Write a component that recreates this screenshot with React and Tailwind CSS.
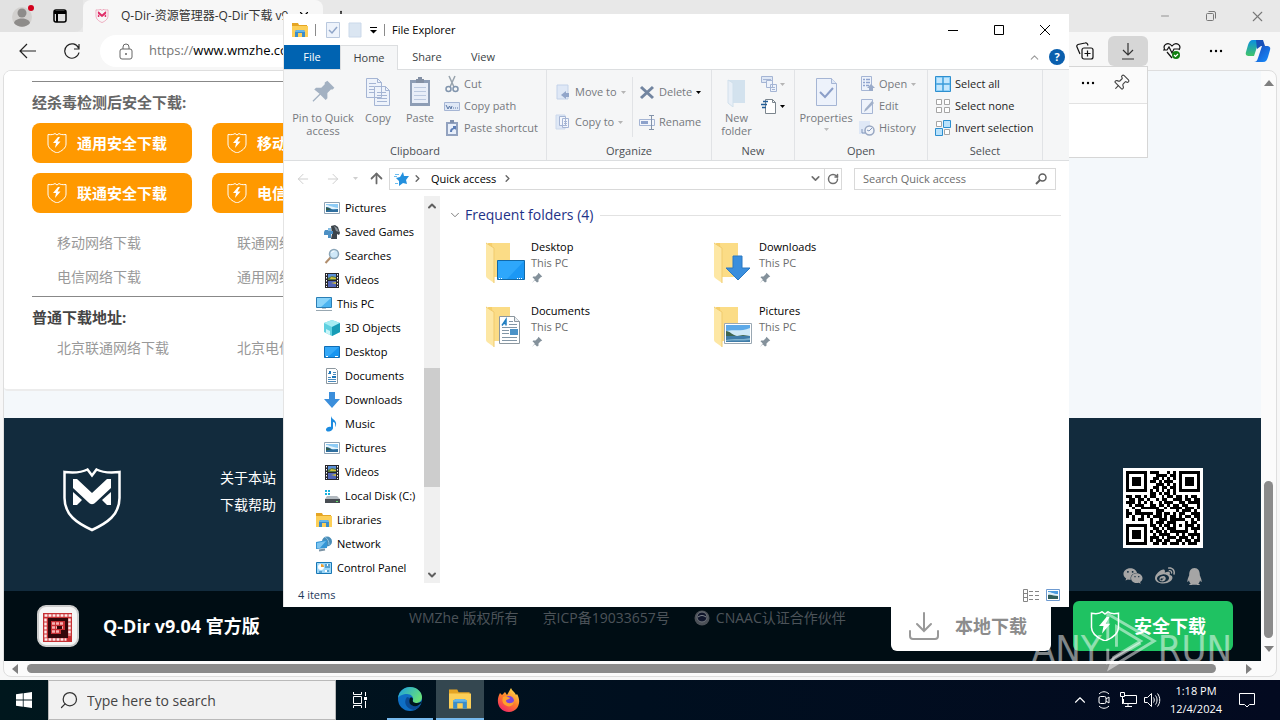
import React from 'react';
import { ChevronDown, ChevronUp, ChevronRight, Lock, RotateCw, ArrowLeft, ArrowRight, ArrowUp, Search, Minus, X, Plus, Pin } from 'lucide-react';
import { FaWeibo, FaWeixin, FaQq } from 'react-icons/fa';
import clsx from 'clsx';

const QR_ROWS = [
  '1111111011100010101111111',
  '1000001000111101101000001',
  '1011101001101010101011101',
  '1011101011010111001011101',
  '1011101000111010101011101',
  '1000001001101101101000001',
  '1111111010101010101111111',
  '0000000011010110100000000',
  '1101101011001011011010110',
  '0110110100101100111011011',
  '1110101010010111001101111',
  '0101110011011010110110001',
  '0010011111100101111011101',
  '1001100000111000010111010',
  '1101111110110110101100111',
  '1010010101110101101011011',
  '0010110010011101111100101',
  '0000000010111011100010110',
  '1111111011010110101011101',
  '1000001001101011100010111',
  '1011101010110101111110010',
  '1011101001011110010101111',
  '1011101011101011101110101',
  '1000001010110110011011011',
  '1111111001101101110101110',
];

const PIN_PATH = 'M10 1l5 5-2 1-3 3v3l-2 1-3-3-4 4 4-5-3-3 1-1h3l3-3z';

function Caret({ className }) {
  return (
    <svg width="5" height="3" viewBox="0 0 5 3" className={clsx('shrink-0', className)} aria-hidden="true">
      <path d="M0 0h5L2.5 3z" fill="currentColor" />
    </svg>
  );
}

/* ---------- small icons of the navigation tree ---------- */

function PictureIcon({ size = 16 }) {
  return (
    <svg width={size} height={size} viewBox="0 0 16 16" aria-hidden="true">
      <path d="M.5 2.500h15v11H.5z" fill="#fff" stroke="#8fa3b5" />
      <path d="M2 4h12v8H2z" fill="#8ecbf5" />
      <path d="M2 5c3 0 5 2 12 3v1H2z" fill="#e6f4fb" />
      <path d="M2 7c3 0 5 2 7 2.500L14 9v3H2z" fill="#2f6f9f" />
      <path d="M2 7.500c2 0 4 1 5 2l-5 1z" fill="#2f5a4b" />
    </svg>
  );
}

function GamesIcon() {
  return (
    <svg width="16" height="16" viewBox="0 0 16 16" aria-hidden="true">
      <path d="M7 2l4-1 3 2 2 6-1 2-2-1v5H7l1-5z" fill="#3c444b" />
      <path d="M10 2l3 2 2 4-3-1z" fill="#8a949c" />
      <path d="M1 6h3V4h3v3h2v3H7v4H4v-3H0V8z" fill="#4d90c4" />
      <path d="M4 4h3v3H4z" fill="#85bce2" />
    </svg>
  );
}

function MagnifierIcon() {
  return (
    <svg width="16" height="16" viewBox="0 0 16 16" aria-hidden="true">
      <path d="M1.500 15L7 9" stroke="#b08d6c" strokeWidth="2" />
      <circle cx="10" cy="6" r="4.500" fill="#cfe8f8" stroke="#8aa5b8" strokeWidth="1.500" />
      <path d="M7.500 5a3 3 0 0 1 3-2" stroke="#fff" fill="none" />
    </svg>
  );
}

function FilmIcon() {
  return (
    <svg width="16" height="16" viewBox="0 0 16 16" aria-hidden="true">
      <path d="M1 1h14v15H1z" fill="#26262c" />
      <path d="M4 2h8v6H4z" fill="#5a7a3c" />
      <path d="M4 2h8v3L8 4 4 6z" fill="#5b8fd6" />
      <path d="M4 9h8v6H4z" fill="#5266b8" />
      <path d="M7 5l5 1v1H6zM7 11l5-1v2z" fill="#d5c33c" />
      <path d="M2.500 2v13M13.500 2v13" stroke="#fff" strokeDasharray="1.500 1.500" />
    </svg>
  );
}

function PcIcon() {
  return (
    <svg width="16" height="16" viewBox="0 0 16 16" aria-hidden="true">
      <path d="M.5 1.500h15v10H.5z" fill="#4db4f0" stroke="#2b7eb5" />
      <path d="M1 2h14L5 11H1z" fill="#8ad4fa" />
      <path d="M0 14.500h16" stroke="#98a7b1" />
      <path d="M6 12h4v1H6z" fill="#b8c4cc" />
    </svg>
  );
}

function CubeIcon() {
  return (
    <svg width="16" height="16" viewBox="0 0 16 16" aria-hidden="true">
      <path d="M8 0l8 3v9l-8 4-8-4V3z" fill="#5fd0e0" />
      <path d="M8 0l8 3-8 4-8-4z" fill="#a5edf3" />
      <path d="M8 7l8-4v9l-8 4z" fill="#179cb6" />
      <path d="M2 9l4 2v4l-4-2z" fill="#c9f5f8" />
    </svg>
  );
}

function DesktopIcon() {
  return (
    <svg width="16" height="16" viewBox="0 0 16 16" aria-hidden="true">
      <path d="M.5 2.500h15v11H.5z" fill="#1795f0" stroke="#0f6db5" />
      <path d="M1 3h14L5 12H1z" fill="#35a9f8" />
      <path d="M2 12.500h2M11 12.500h3" stroke="#fff" />
    </svg>
  );
}

function DocumentIcon() {
  return (
    <svg width="16" height="16" viewBox="0 0 16 16" aria-hidden="true">
      <path d="M2.500.5h9l2 2v13h-11z" fill="#fff" stroke="#8c979f" />
      <path d="M4 5.500h3M9 4.500h3M9 6.500h3M4 9.500h3M4 11.500h8M4 13.500h8" stroke="#4a89bb" />
      <path d="M5 3h2v3H5zM8 8h4v2H8z" fill="#1d77bb" />
    </svg>
  );
}

function DownArrowIcon() {
  return (
    <svg width="16" height="16" viewBox="0 0 16 16" aria-hidden="true">
      <path d="M5 0h6v7h5l-8 9-8-9h5z" fill="#3b8edb" />
    </svg>
  );
}

function MusicIcon() {
  return (
    <svg width="16" height="16" viewBox="0 0 16 16" aria-hidden="true">
      <path d="M7 0c1 4 6 4 5 9 0 1-1 2-1 2 1-4-1-5-2-5v6c0 3-6 5-7 2-.5-3 4-4 5-3z" fill="#1c8be0" />
    </svg>
  );
}

function DiskIcon() {
  return (
    <svg width="16" height="16" viewBox="0 0 16 16" aria-hidden="true">
      <path d="M1 2h2v2H1zM4 2h2v2H4zM1 5h2v2H1zM4 5h2v2H4z" fill="#19b1dd" />
      <path d="M3 8h10l3 3H1z" fill="#b3bac0" />
      <path d="M1 11h15v4H1z" fill="#474d52" />
      <path d="M12 13.500h2" stroke="#63e06a" />
    </svg>
  );
}

function ExplorerIcon({ size = 16 }) {
  return (
    <svg width={size} height={size} viewBox="0 0 16 16" aria-hidden="true">
      <path d="M0 1h6l1 2h8v4H0z" fill="#e5a524" />
      <path d="M0 4h16v11H0z" fill="#fccf58" />
      <path d="M3 15V9l2-1h6l2 1v6h-3v-4H6v4z" fill="#3c8dc9" />
      <path d="M3 9l2-1h6l2 1v1H3z" fill="#66b6e8" />
    </svg>
  );
}

function NetworkIcon() {
  return (
    <svg width="16" height="16" viewBox="0 0 16 16" aria-hidden="true">
      <circle cx="11" cy="5.500" r="5" fill="#4a8db8" />
      <path d="M9 1c3 2 4 4 4 8" stroke="#8fc4e3" fill="none" />
      <path d="M0 6l11-2v8L0 13z" fill="#3596d6" />
      <path d="M1 7l9-2-6 7H1z" fill="#7cc4ef" />
      <path d="M3 14.500l6-1" stroke="#7b93a4" strokeWidth="2" />
    </svg>
  );
}

function ControlPanelIcon() {
  return (
    <svg width="16" height="16" viewBox="0 0 16 16" aria-hidden="true">
      <path d="M.5 2.500h15v11H.5z" fill="#9dd7f8" stroke="#1877b4" />
      <circle cx="5" cy="7" r="3" fill="#fff" />
      <path d="M5 7V4a3 3 0 0 1 3 3z" fill="#f0a132" />
      <path d="M9 5h5M9 7h5M3 12h3M9 11h4" stroke="#156da7" />
      <path d="M11 4h1v2h-1zM9 10h2v2H9z" fill="#fff" />
    </svg>
  );
}

const TREE = [
  { label: 'Pictures', Icon: PictureIcon, level: 2 },
  { label: 'Saved Games', Icon: GamesIcon, level: 2 },
  { label: 'Searches', Icon: MagnifierIcon, level: 2 },
  { label: 'Videos', Icon: FilmIcon, level: 2 },
  { label: 'This PC', Icon: PcIcon, level: 1 },
  { label: '3D Objects', Icon: CubeIcon, level: 2 },
  { label: 'Desktop', Icon: DesktopIcon, level: 2 },
  { label: 'Documents', Icon: DocumentIcon, level: 2 },
  { label: 'Downloads', Icon: DownArrowIcon, level: 2 },
  { label: 'Music', Icon: MusicIcon, level: 2 },
  { label: 'Pictures', Icon: PictureIcon, level: 2 },
  { label: 'Videos', Icon: FilmIcon, level: 2 },
  { label: 'Local Disk (C:)', Icon: DiskIcon, level: 2 },
  { label: 'Libraries', Icon: ExplorerIcon, level: 1 },
  { label: 'Network', Icon: NetworkIcon, level: 1 },
  { label: 'Control Panel', Icon: ControlPanelIcon, level: 1 },
];

const FOLDERS = ['Desktop', 'Downloads', 'Documents', 'Pictures'];

function FolderIcon({ kind }) {
  return (
    <svg width="40" height="42" viewBox="0 0 40 42" className="mt-0.5 shrink-0" aria-hidden="true">
      <path d="M3 2h22v34H9z" fill="#f6cf6b" />
      <path d="M7 2h18v34H9z" fill="#fbdc86" />
      <path d="M1 2l8 5v35l-7-5c-1-1-1-2-1-3z" fill="#fde7a4" />
      <path d="M1 2l8 5v35" stroke="#f1cb6c" fill="none" />
      {kind === 'Desktop' && (
        <g>
          <path d="M12.500 19.500h27v19h-27z" fill="#1b98f5" stroke="#1269a8" />
          <path d="M13 20h26L22 38h-9z" fill="#2ea7fb" />
          <path d="M14 37.500h3M32 37.500h6" stroke="#fff" strokeDasharray="1 1" />
        </g>
      )}
      {kind === 'Downloads' && <path d="M20 15h9v12h8L25 39 13 27h7z" fill="#3a8edd" stroke="#2b78c2" strokeWidth="1" />}
      {kind === 'Documents' && (
        <g>
          <path d="M14.500 11.500h15l5 5v22h-20z" fill="#fff" stroke="#8c979f" />
          <path d="M29.500 11.500v5h5" fill="#e9eef1" stroke="#8c979f" />
          <path d="M24 16.500h4M24 19.500h8M17 22.500h15M17 25.500h7M17 28.500h7M17 32.500h15M17 35.500h15" stroke="#8296a6" />
          <path d="M17 20.500l4-6v6M18.500 18.500h3" stroke="#1f7ec1" strokeWidth="1.500" fill="none" />
          <path d="M25 24h8v6h-8z" fill="#4a92c7" />
        </g>
      )}
      {kind === 'Pictures' && (
        <g>
          <path d="M11.500 18.500h27v20h-27z" fill="#fff" stroke="#9aa8b3" />
          <path d="M13 20h24v17H13z" fill="#5ca9e8" />
          <path d="M13 26c8-2 14 1 24-3v8H13z" fill="#cfe9f7" />
          <path d="M13 26c4 0 6 4 11 5l6-1 7 1v1H13z" fill="#3f6650" />
          <path d="M13 31h24v6H13z" fill="#3f7ca8" />
          <path d="M13 35c7-2 16 0 24-2v2c-8 1-16 0-24 1z" fill="#7fb2cf" />
        </g>
      )}
    </svg>
  );
}

/* ---------- ribbon ---------- */

function RibbonGlyph({ name }) {
  const blue = '#a5b5d4';
  const pale = '#dfe8f6';
  switch (name) {
    case 'pin':
      return (
        <svg width="28" height="30" viewBox="0 0 16 17">
          <path d="M10.500 2l4 4-1 1h-1l-2 2v3l-1 1-3-3-4 4-.5-.5 4-4-3-2.500 1-1h3l2-2V3z" fill="#a3b1c2" />
        </svg>
      );
    case 'copy':
      return (
        <svg width="28" height="30" viewBox="0 0 28 30">
          <path d="M2.500 1.500h11l4 4v15h-15zM10.500 9.500h11l4 4v15h-15z" fill="#eef3fb" stroke={blue} />
          <path d="M13.500 1.500v4h4M21.500 9.500v4h4M5 6.500h7M5 9.500h5M5 12.500h5M5 15.500h5M13 15.500h9M13 18.500h10M13 21.500h10M13 24.500h10" fill="none" stroke={blue} />
        </svg>
      );
    case 'paste':
      return (
        <svg width="28" height="30" viewBox="0 0 28 30">
          <path d="M4 3h20v26H4z" fill="#8d9db5" />
          <path d="M6 6h16v20H6z" fill="#e8eef8" />
          <path d="M10 2h2V0h4v2h2v4h-8z" fill="#8390a4" />
          <path d="M8 10.500h12M8 14.500h12M8 18.500h12M8 22.500h12" stroke="#bac8df" />
        </svg>
      );
    case 'folder':
      return (
        <svg width="28" height="30" viewBox="0 0 28 30">
          <path d="M5 3h17v23H9z" fill="#d3e2ee" />
          <path d="M5 3l5 3v24l-5-4z" fill="#e8eff7" stroke="#d1e0ec" />
        </svg>
      );
    case 'properties':
      return (
        <svg width="28" height="30" viewBox="0 0 28 30">
          <path d="M4.500 1.500h15l5 5v22h-20z" fill="#edf2fb" stroke={blue} />
          <path d="M19.500 1.500v5h5" fill={pale} stroke={blue} />
          <path d="M8 15l5 5 8-9" fill="none" stroke="#8c9fc8" strokeWidth="2" />
        </svg>
      );
    case 'cut':
      return (
        <svg width="16" height="18" viewBox="0 0 16 18">
          <path d="M5 1l5 11M11 1L6 12" stroke="#98a3ad" strokeWidth="1.500" />
          <circle cx="4.500" cy="14" r="2.500" fill="none" stroke="#8195ad" strokeWidth="1.500" />
          <circle cx="11.500" cy="14" r="2.500" fill="none" stroke="#8195ad" strokeWidth="1.500" />
        </svg>
      );
    case 'path':
      return (
        <svg width="16" height="16" viewBox="0 0 16 16">
          <path d="M.5 4.500h15v8H.5z" fill={pale} stroke={blue} />
          <path d="M2 7l2 4 1.500-3L7 11l1-3M9 10h1M11 10h1M13 10h1" fill="none" stroke="#5a77a5" />
        </svg>
      );
    case 'shortcut':
      return (
        <svg width="16" height="16" viewBox="0 0 16 16">
          <path d="M2 2h12v14H2z" fill="#92a2bf" />
          <path d="M4 4h8v10H4z" fill="#e8effa" />
          <path d="M6 0h4v3H6z" fill="#7f90ad" />
          <path d="M6 12c0-3 1-4 3-4V6h3v4l-1-1c-2 0-3 1-3 3z" fill="#5d7eb6" />
        </svg>
      );
    case 'move':
      return (
        <svg width="16" height="16" viewBox="0 0 16 16">
          <path d="M2 1h11v14H2z" fill={pale} stroke="#c3d2e9" />
          <path d="M14 9h-3V7l-5 4 5 4v-2h3z" fill="#92a6ca" />
        </svg>
      );
    case 'copyTo':
      return (
        <svg width="16" height="16" viewBox="0 0 16 16">
          <path d="M1 1h9v14H1z" fill={pale} stroke="#ccd9ec" />
          <path d="M4.500 2.500h6v9h-6zM7.500 4.500h6v9h-6z" fill="#f4f7fc" stroke={blue} />
          <path d="M9 7.500h3M9 9.500h3M9 11.500h3" stroke={blue} />
        </svg>
      );
    case 'delete':
      return (
        <svg width="16" height="16" viewBox="0 0 16 16">
          <path d="M2 3l12 11M14 3L2 14" stroke="#7285a0" strokeWidth="3" />
        </svg>
      );
    case 'rename':
      return (
        <svg width="16" height="16" viewBox="0 0 16 16">
          <path d="M.5 5.500h15v6H.5z" fill="#f3f6fc" stroke={blue} />
          <path d="M2 7h7v3H2z" fill="#8da2cb" />
          <path d="M10 1.500h5M12.500 2v13M10 15.500h5" stroke="#8393aa" />
        </svg>
      );
    case 'newItem':
      return (
        <svg width="17" height="16" viewBox="0 0 17 16">
          <path d="M.5.500h11v6H.5z" fill={pale} stroke={blue} />
          <path d="M5.500 4.500h6v7h-6zM9.500 8.500h6v7h-6z" fill="#eef3fb" stroke={blue} />
          <path d="M2 3.500h8M11 11.500h3M11 13.500h3" stroke={blue} />
        </svg>
      );
    case 'easyAccess':
      return (
        <svg width="17" height="16" viewBox="0 0 17 16">
          <path d="M4.500 1.500h7l3 3v11h-10z" fill="#fff" stroke="#7b858d" />
          <path d="M11.500 1.500v3h3" fill="none" stroke="#7b858d" />
          <path d="M2 3.500h5M0 6.500h6M1 9.500h4" stroke="#235d96" strokeWidth="1.500" />
        </svg>
      );
    case 'open':
      return (
        <svg width="16" height="16" viewBox="0 0 16 16">
          <path d="M2.500.500h10v14h-10z" fill="#eef3fb" stroke={blue} />
          <path d="M4 3.500h2M4 6.500h2M4 9.500h2M7 3.500h4M7 6.500h4M7 9.500h3" stroke="#8fa4cf" strokeWidth="1.500" />
          <path d="M12 8l4 4h-2v3h-4v-3H8z" fill="#9aabc9" />
        </svg>
      );
    case 'edit':
      return (
        <svg width="16" height="16" viewBox="0 0 16 16">
          <path d="M2.500 1.500h11v14h-11z" fill="#eef3fb" stroke={blue} />
          <path d="M5 14l1-3 7-8 2 2-7 7z" fill="#a1b0c9" />
        </svg>
      );
    case 'history':
      return (
        <svg width="16" height="16" viewBox="0 0 16 16">
          <path d="M0 1h11v13H0z" fill={pale} />
          <circle cx="10.500" cy="10.500" r="4.500" fill="#f2f5fa" stroke="#98a7c2" strokeWidth="1.500" />
          <path d="M13 8l-3 3-2-1M3 9v4h3" fill="none" stroke="#8297bb" />
        </svg>
      );
    case 'selectAll':
      return (
        <svg width="16" height="16" viewBox="0 0 16 16">
          <path d="M.5.500h15v15H.5z" fill="#8ed0f9" stroke="#2d8fcf" />
          <path d="M2 2h5v5H2zM9 2h5v5H9zM2 9h5v5H2zM9 9h5v5H9z" fill="#c4e7fd" />
          <path d="M8 1v14M1 8h14" stroke="#2d8fcf" />
        </svg>
      );
    case 'selectNone':
      return (
        <svg width="16" height="16" viewBox="0 0 16 16">
          <path d="M1.500 1.500h5v5h-5zM9.500 1.500h5v5h-5zM1.500 9.500h5v5h-5zM9.500 9.500h5v5h-5z" fill="#fff" stroke="#a5a5a5" />
        </svg>
      );
    case 'invert':
      return (
        <svg width="16" height="16" viewBox="0 0 16 16">
          <path d="M1.500 1.500h5v5h-5zM9.500 9.500h5v5h-5z" fill="#fff" stroke="#a5a5a5" />
          <path d="M8.500.500h7v7h-7zM.5 8.500h7v7h-7z" fill="#b9e2fc" stroke="#2d8fcf" />
        </svg>
      );
    default:
      return null;
  }
}

function SmallAction({ icon, label, caret, active, darkCaret, title }) {
  return (
    <button
      type="button"
      aria-label={title}
      className={clsx('flex h-[22px] items-center whitespace-nowrap', label ? 'gap-1' : 'gap-0.5', active ? 'text-[#1e1e1e]' : 'text-[#75797e]')}
    >
      <RibbonGlyph name={icon} />
      {label && <span>{label}</span>}
      {caret && <Caret className={darkCaret ? 'text-black' : 'text-[#b5b5b5]'} />}
    </button>
  );
}

function BigAction({ icon, label, className, caret }) {
  return (
    <button type="button" className={clsx('flex flex-col items-center pt-1 leading-[13px] text-[#75797e]', className)}>
      <RibbonGlyph name={icon} />
      <span className="mt-1 text-center">{label}</span>
      {caret && <Caret className="mt-1 text-[#bdbdbd]" />}
    </button>
  );
}

function RibbonGroup({ title, className, children }) {
  return (
    <section className={clsx('flex shrink-0 flex-col border-r border-[#e1e3e6]', className)}>
      <div className="flex h-[73px] shrink-0 items-start pt-[3px]">{children}</div>
      <h3 className="text-center leading-4 text-[#4b4f54]">{title}</h3>
    </section>
  );
}

function Ribbon() {
  return (
    <div className="flex h-[92px] border-y border-[#dcdee0] bg-[#f5f6f7]">
      <RibbonGroup title="Clipboard" className="w-[263px]">
        <BigAction icon="pin" label="Pin to Quick access" className="ml-1 w-[70px]" />
        <BigAction icon="copy" label="Copy" className="w-10" />
        <BigAction icon="paste" label="Paste" className="w-11" />
        <div className="flex flex-col pl-0.5">
          <SmallAction icon="cut" label="Cut" />
          <SmallAction icon="path" label="Copy path" />
          <SmallAction icon="shortcut" label="Paste shortcut" />
        </div>
      </RibbonGroup>
      <RibbonGroup title="Organize" className="w-[165px]">
        <div className="mt-1 flex w-[86px] flex-col gap-2 border-r border-[#e1e3e6] pt-1 pb-1 pl-2">
          <SmallAction icon="move" label="Move to" caret />
          <SmallAction icon="copyTo" label="Copy to" caret />
        </div>
        <div className="mt-1 flex flex-col gap-2 pt-1 pl-1.5">
          <SmallAction icon="delete" label="Delete" caret darkCaret />
          <SmallAction icon="rename" label="Rename" />
        </div>
      </RibbonGroup>
      <RibbonGroup title="New" className="w-[83px]">
        <BigAction icon="folder" label="New folder" className="w-[49px]" />
        <div className="flex flex-col">
          <SmallAction icon="newItem" title="New item" caret />
          <SmallAction icon="easyAccess" title="Easy access" caret darkCaret />
        </div>
      </RibbonGroup>
      <RibbonGroup title="Open" className="w-[133px]">
        <BigAction icon="properties" label="Properties" caret className="w-[62px]" />
        <div className="flex flex-col pl-0.5">
          <SmallAction icon="open" label="Open" caret />
          <SmallAction icon="edit" label="Edit" />
          <SmallAction icon="history" label="History" />
        </div>
      </RibbonGroup>
      <RibbonGroup title="Select" className="w-[115px]">
        <div className="flex flex-col pl-[7px]">
          <SmallAction icon="selectAll" label="Select all" active />
          <SmallAction icon="selectNone" label="Select none" active />
          <SmallAction icon="invert" label="Invert selection" active />
        </div>
      </RibbonGroup>
    </div>
  );
}

function ExplorerTitleBar() {
  return (
    <header className="flex h-[31px] items-center pl-2">
      <ExplorerIcon />
      <span className="ml-[7px] h-3 w-px bg-[#8b8b8b]" />
      <svg width="14" height="16" viewBox="0 0 14 16" className="ml-2.5" aria-hidden="true">
        <path d="M.5.500h13v15H.5z" fill="#eef3fb" stroke="#b9c8de" />
        <path d="M3 8l3 3 5-6" fill="none" stroke="#8fa5c8" strokeWidth="1.500" />
      </svg>
      <svg width="14" height="16" viewBox="0 0 14 16" className="ml-2" aria-hidden="true">
        <path d="M1 1h12v14H1z" fill="#dbe6f2" stroke="#cbd9ea" />
      </svg>
      <svg width="7" height="8" viewBox="0 0 7 8" className="ml-2" aria-hidden="true">
        <path d="M0 1.500h7" stroke="#000" />
        <path d="M0 4h7L3.500 7.500z" />
      </svg>
      <span className="mx-[7px] h-3 w-px bg-[#8b8b8b]" />
      <h1 className="text-black">File Explorer</h1>
      <div className="ml-auto flex h-full">
        <button type="button" aria-label="Minimize" className="flex w-[46px] items-center justify-center">
          <svg width="10" height="10" aria-hidden="true"><path d="M0 5.500h10" stroke="#000" /></svg>
        </button>
        <button type="button" aria-label="Maximize" className="flex w-[45px] items-center justify-center">
          <svg width="10" height="10" aria-hidden="true"><path d="M.5.500h9v9h-9z" fill="none" stroke="#000" /></svg>
        </button>
        <button type="button" aria-label="Close" className="flex w-12 items-center justify-center">
          <svg width="10" height="10" aria-hidden="true"><path d="M0 0l10 10M10 0L0 10" stroke="#000" /></svg>
        </button>
      </div>
    </header>
  );
}

function AddressRow() {
  return (
    <div className="flex h-[35px] shrink-0 items-center pr-[13px] pl-[11px]">
      <button type="button" aria-label="Back"><ArrowLeft size={16} strokeWidth={1.500} className="text-[#cfcfcf]" /></button>
      <button type="button" aria-label="Forward" className="ml-3.5"><ArrowRight size={16} strokeWidth={1.500} className="text-[#cfcfcf]" /></button>
      <Caret className="ml-3 text-[#cfcfcf]" />
      <button type="button" aria-label="Up" className="ml-2.5"><ArrowUp size={17} strokeWidth={2.500} className="text-[#6a6a6a]" /></button>
      <div className="ml-1 flex h-[22px] flex-1 items-center border border-[#d9d9d9]">
        <svg width="16" height="16" viewBox="0 0 16 16" className="ml-1 shrink-0" aria-hidden="true">
          <path d="M9 1l1 4 5 0-3 4 1 4-4-1-4 3 0-5-3-3 4-1z" fill="#2390de" />
          <path d="M5 3.500H1M3 5.500H0M4 12.500H1" stroke="#6cbdf0" />
        </svg>
        <ChevronRight size={11} strokeWidth={3} className="mr-1 ml-0.5 text-[#666]" />
        <span className="ml-1 text-black">Quick access</span>
        <ChevronRight size={11} strokeWidth={3} className="ml-1.5 text-[#666]" />
        <button type="button" aria-label="Previous locations" className="mr-0.5 ml-auto"><ChevronDown size={13} strokeWidth={3} className="text-[#707070]" /></button>
        <button type="button" aria-label="Refresh" className="flex h-full w-[17px] items-center justify-center border-l border-[#d9d9d9]">
          <RotateCw size={12} strokeWidth={3} className="text-[#707070]" />
        </button>
      </div>
      <label className="ml-3 flex h-[22px] w-[202px] items-center border border-[#d9d9d9] px-2">
        <input type="text" aria-label="Search Quick access" placeholder="Search Quick access" className="min-w-0 flex-1 outline-none placeholder:text-[#6d6d6d]" />
        <svg width="12" height="12" viewBox="0 0 12 12" fill="none" stroke="#606060" strokeWidth="1.500" aria-hidden="true">
          <circle cx="7.500" cy="4.500" r="3.500" />
          <path d="M5 7L1 11" strokeWidth="2" />
        </svg>
      </label>
    </div>
  );
}

function NavigationTree() {
  return (
    <div className="flex w-[156px] shrink-0">
      <ul className="min-w-0 flex-1 overflow-hidden text-black">
        {TREE.map(({ label, Icon, level }, index) => (
          <li key={`${label}-${index}`} className={clsx('flex h-6 items-center gap-[5px] whitespace-nowrap', level === 1 ? 'pl-8' : 'pl-10')}>
            <Icon />
            <span>{label}</span>
          </li>
        ))}
      </ul>
      <div className="flex w-4 flex-col items-center bg-[#f0f0f0]">
        <ChevronUp size={12} strokeWidth={4} className="my-1 text-[#606060]" />
        <div className="mt-[152px] h-[119px] w-full bg-[#cdcdcd]" />
        <ChevronDown size={12} strokeWidth={4} className="mt-auto mb-0.5 text-[#606060]" />
      </div>
    </div>
  );
}

function ExplorerWindow() {
  return (
    <section
      aria-label="File Explorer"
      className="absolute top-[14px] right-[211px] bottom-[113px] left-[283px] z-20 flex flex-col border-l border-[#e4e4e4] bg-white text-[11px] leading-4"
    >
      <ExplorerTitleBar />
      <nav className="flex h-6 items-stretch text-[#3b3f44]">
        <button type="button" className="w-14 bg-[#0063b1] text-white">File</button>
        <button type="button" className="relative z-10 -mb-px w-[58px] border border-b-0 border-[#dcdee0] bg-[#f5f6f7]">Home</button>
        <button type="button" className="w-[58px]">Share</button>
        <button type="button" className="w-[54px]">View</button>
        <span className="ml-auto flex items-center gap-2 pr-1">
          <ChevronUp size={13} className="text-[#9b9b9b]" />
          <span className="flex size-4 items-center justify-center rounded-full bg-[#0a5fae] font-bold text-white">?</span>
        </span>
      </nav>
      <Ribbon />
      <AddressRow />
      <div className="flex min-h-0 flex-1">
        <NavigationTree />
        <main className="min-w-0 flex-1 pt-[7px] pr-2 pl-2">
          <div className="flex items-center gap-[3px]">
            <ChevronDown size={14} strokeWidth={1.500} className="text-[#6b6b6b]" />
            <h2 className="text-[14px] leading-6 text-[#1e3287]">Frequent folders (4)</h2>
            <span className="ml-1 h-px flex-1 bg-[#e2e2e2]" />
          </div>
          <ul className="mt-3 ml-[37px] grid grid-cols-[228px_228px] gap-y-4">
            {FOLDERS.map((name) => (
              <li key={name} className="flex h-12 gap-1.5">
                <FolderIcon kind={name} />
                <div>
                  <p className="text-black">{name}</p>
                  <p className="text-[#6d6d6d]">This PC</p>
                  <svg width="12" height="12" viewBox="0 0 16 16" className="mt-px" aria-hidden="true">
                    <path d={PIN_PATH} fill="#84919b" />
                  </svg>
                </div>
              </li>
            ))}
          </ul>
        </main>
      </div>
      <footer className="flex h-6 shrink-0 items-center pr-[9px] pl-3.5 text-[#1e395b]">
        <span>4 items</span>
        <svg width="17" height="13" viewBox="0 0 17 13" className="ml-auto" aria-hidden="true">
          <path d="M.5.500h4v12h-4zM1 4.500h3M1 8.500h3" fill="none" stroke="#858585" />
          <path d="M6 2.500h4M12 2.500h4M6 6.500h4M12 6.500h4M6 10.500h4M12 10.500h4" stroke="#858585" />
        </svg>
        <svg width="14" height="12" viewBox="0 0 14 12" className="ml-1.5" aria-hidden="true">
          <path d="M.5.500h13v11H.5z" fill="#fff" stroke="#6e9ad0" />
          <path d="M2 2h10v8H2z" fill="#4a9be0" />
          <path d="M2 3c4 0 5 2 10 2v2H2z" fill="#dff0fa" />
          <path d="M2 6c3-1 6 1 10 1v3H2z" fill="#315f5c" />
        </svg>
      </footer>
    </section>
  );
}

/* ---------- browser ---------- */

function Shield({ size, color = '#fff' }) {
  return (
    <svg width={size} height={size} viewBox="0 0 20 20" aria-hidden="true">
      <path d="M1 1.500c3 .500 6 0 7-1l2 1.500 2-1.500c1 1 4 1.500 7 1V11c0 4-4 7-9 9-5-2-9-5-9-9z" fill="none" stroke={color} strokeWidth="1" />
      <path d="M11 4l-5 6h3l-1 5 5.500-6.500h-3L13 4z" fill={color} />
    </svg>
  );
}

function MShield({ size, stroke, fill }) {
  return (
    <svg width={size} height={size} viewBox="0 0 64 64" aria-hidden="true">
      <path d="M4.500 4c9 1 18 0 23-2.500l4.500 6 4.500-6c5 2.500 14 3.500 23 2.500v26c0 17-12.500 25-27.500 32C17 55 4.500 47 4.500 30z" fill="none" stroke={stroke} strokeWidth="2.500" />
      <path d="M13 11l4 0 15 14 15-14h4v9L36 34c-3 3-5 3-8 0L13 20zM13 24l9 8-5 5h-4zM51 24l-9 8 5 5h4z" fill={fill} />
    </svg>
  );
}

function TabStrip() {
  return (
    <div className="flex h-8 items-stretch bg-[#e8e8e8]">
      <div className="flex w-[83px] items-center rounded-br-lg bg-[#e2e2e2] pl-3">
        <svg width="24" height="26" viewBox="0 0 24 26" aria-hidden="true">
          <circle cx="10" cy="14" r="10" fill="#d2d0ce" />
          <circle cx="10" cy="10" r="4.500" fill="#8e8c8a" />
          <path d="M2 20c1-6 15-6 16 0-4 5-12 5-16 0z" fill="#8e8c8a" />
          <circle cx="19" cy="5" r="3" fill="#d2001c" />
        </svg>
        <svg width="14" height="14" viewBox="0 0 14 14" className="ml-[17px]" aria-hidden="true">
          <rect x="1" y="1" width="12" height="12" rx="2" fill="none" stroke="#000" strokeWidth="1.500" />
          <path d="M1 2h12v3H1zM3 5h2v8H3z" />
        </svg>
      </div>
      <div className="flex w-60 items-center rounded-t-lg bg-[#f7f7f7] pr-3 pl-3">
        <MShield size={14} stroke="#e87599" fill="#e02c67" />
        <span className="ml-3 flex-1 truncate text-[12px] text-[#333]">Q-Dir-资源管理器-Q-Dir下载 v9</span>
        <X size={14} className="shrink-0" />
      </div>
      <Plus size={16} className="mt-2 ml-2.5" />
      <div className="ml-auto flex text-[#777]">
        <button type="button" aria-label="Minimize window" className="flex w-[46px] items-center justify-center"><Minus size={12} strokeWidth={1.500} /></button>
        <button type="button" aria-label="Restore window" className="flex w-[46px] items-center justify-center">
          <svg width="10" height="10" viewBox="0 0 10 10" fill="none" stroke="currentColor" aria-hidden="true">
            <rect x=".5" y="2.500" width="7" height="7" rx="1" />
            <path d="M2.500.500H8A1.500 1.500 0 0 1 9.500 2v5.500" />
          </svg>
        </button>
        <button type="button" aria-label="Close window" className="flex w-[46px] items-center justify-center"><X size={17} strokeWidth={1.500} /></button>
      </div>
    </div>
  );
}

function Dots({ size = 14 }) {
  return (
    <svg width={size} height="4" viewBox="0 0 14 4" aria-hidden="true">
      <circle cx="2" cy="2" r="1.200" />
      <circle cx="7" cy="2" r="1.200" />
      <circle cx="12" cy="2" r="1.200" />
    </svg>
  );
}

function BrowserToolbar() {
  return (
    <div className="relative flex h-[38px] items-center">
      <button type="button" aria-label="Back to previous page" className="ml-[19px]">
        <svg width="17" height="16" viewBox="0 0 17 16" fill="none" stroke="#222" aria-hidden="true"><path d="M8 1L1 8l7 7M1 8h16" strokeWidth="1.200" /></svg>
      </button>
      <button type="button" aria-label="Reload" className="ml-7">
        <svg width="16" height="17" viewBox="0 0 16 17" fill="none" stroke="#222" aria-hidden="true"><path d="M14.500 5A7.200 7.200 0 1 0 15 9.500M15 1v5h-5" strokeWidth="1.200" /></svg>
      </button>
      <div className="ml-5 flex h-8 flex-1 items-center rounded-full bg-white pl-[18px]">
        <svg width="16" height="17" viewBox="0 0 16 17" fill="none" stroke="#666" aria-hidden="true">
          <rect x="2" y="6" width="12" height="10" rx="2" />
          <path d="M5 6V4a3 3 0 0 1 6 0v2" />
          <circle cx="8" cy="11" r="1" fill="#666" stroke="none" />
        </svg>
        <span className="ml-[15px] text-[13px] text-[#767676]">https://<span className="text-black">www.wmzhe.co</span></span>
      </div>
      <div className="flex w-[218px] shrink-0 items-center">
        <div className="flex w-[46px] justify-center">
          <svg width="18" height="18" viewBox="0 0 18 18" fill="none" stroke="#111" strokeWidth="1.200" aria-hidden="true">
            <rect x="6" y="6" width="11" height="11" rx="2" />
            <path d="M11.500 8.500v6M8.500 11.500h6M4 12L1 5c-.5-1 0-2 1-2.500L9 1c1-.5 2 0 2.500 1l.5 1.500" />
          </svg>
        </div>
        <button type="button" aria-label="Downloads" className="flex h-[30px] w-10 items-center justify-center rounded-md bg-[#d6d6d6]">
          <svg width="14" height="17" viewBox="0 0 14 17" fill="none" stroke="#333" strokeWidth="1.200" aria-hidden="true"><path d="M7 0v12M2 7l5 5 5-5M1 16h12" /></svg>
        </button>
        <div className="flex w-12 justify-center">
          <svg width="18" height="18" viewBox="0 0 18 18" fill="none" stroke="#111" strokeWidth="1.200" aria-hidden="true">
            <path d="M2 8C-1 3 5-1 9 4c4-5 10-1 7 4M0 8h4l2-3 3 6 2-4h6M4 10l5 6" />
            <circle cx="13" cy="13" r="4" fill="#118011" stroke="none" />
            <path d="M11 13l1.500 1.500L15 12" stroke="#fff" />
          </svg>
        </div>
        <button type="button" aria-label="Settings and more" className="flex w-10 justify-center"><Dots /></button>
        <svg width="26" height="24" viewBox="0 0 26 24" className="ml-[9px]" aria-hidden="true">
          <defs>
            <linearGradient id="cpA" x1="0" y1="0" x2="0" y2="1"><stop stopColor="#0a8fe0" /><stop offset="1" stopColor="#42c568" /></linearGradient>
            <linearGradient id="cpB" x1="0" y1="0" x2="1" y2="1"><stop stopColor="#1b4aba" /><stop offset="1" stopColor="#168fff" /></linearGradient>
          </defs>
          <path d="M17 1H8C5 1 4 3 3 6l-2 7c-1 3 1 4 3 4h5l4-12c1-3 2-4 4-4z" fill="url(#cpA)" />
          <path d="M9 23h9c3 0 4-2 5-5l2-7c1-3-1-4-3-4h-5l-4 12c-1 3-2 4-4 4z" fill="url(#cpB)" />
          <path d="M11 1h7l2 6h-4l-4 3z" fill="#1851b8" />
        </svg>
      </div>
      {/* downloads flyout */}
      <div className="absolute top-[34px] right-[132px] z-10 h-[92px] w-80 border border-[#d6d6d6] bg-white">
        <div className="flex h-[37px] items-center justify-end gap-[17px] border-b border-[#e2e2e2] bg-[#fbfbfb] pr-[17px] pb-1">
          <Dots />
          <Pin size={18} strokeWidth={1.500} className="rotate-45 text-[#444]" />
        </div>
      </div>
    </div>
  );
}

function SafeButton({ label }) {
  return (
    <button type="button" className="flex h-10 w-40 shrink-0 items-center gap-2.5 rounded-lg bg-[#ff9900] pl-[15px] text-[15px] leading-4 font-bold text-white">
      <Shield size={20} />
      <span className="whitespace-nowrap">{label}</span>
    </button>
  );
}

function DownloadPanel() {
  return (
    <section className="h-[320px] w-[80%] rounded-b border-b-2 border-[#ececec] bg-white pt-2.5 pl-7">
      <div className="border-t border-[#888] pt-2">
        <h2 className="text-[15px] leading-6 font-bold text-[#666]">经杀毒检测后安全下载:</h2>
        <div className="mt-[9px] grid grid-cols-[160px_160px] gap-x-5 gap-y-2.5">
          <SafeButton label="通用安全下载" />
          <SafeButton label="移动安全下载" />
          <SafeButton label="联通安全下载" />
          <SafeButton label="电信安全下载" />
        </div>
        <div className="grid grid-cols-[180px_180px] gap-y-2.5 pt-[18px] pb-[7px] pl-[25px] text-[14px] leading-6 text-[#999]">
          <a href="#cmcc">移动网络下载</a>
          <a href="#cucc">联通网络下载</a>
          <a href="#ctcc">电信网络下载</a>
          <a href="#all">通用网络下载</a>
        </div>
      </div>
      <div className="border-t border-[#888] pt-2">
        <h2 className="text-[15px] leading-6 font-bold text-[#444]">普通下载地址:</h2>
        <div className="mt-[7px] grid grid-cols-[180px_180px] pl-[25px] text-[14px] leading-6 text-[#999]">
          <a href="#bj1">北京联通网络下载</a>
          <a href="#bj2">北京电信网络下载</a>
        </div>
      </div>
    </section>
  );
}

function QrCode() {
  return (
    <svg width="80" height="80" viewBox="-1 -1 27 27" shapeRendering="crispEdges" className="bg-white" role="img" aria-label="QR">
      {QR_ROWS.map((row, y) =>
        row.split('').map((cell, x) => (cell === '1' ? <rect key={`${x}-${y}`} x={x} y={y} width="1" height="1" /> : null))
      )}
    </svg>
  );
}

function SiteFooter() {
  return (
    <footer className="flex h-[173px] items-start bg-[#122b3d] pt-[50px] pr-[58px] pl-14">
      <MShield size={64} stroke="#fff" fill="#fff" />
      <ul className="-mt-0.5 ml-24 flex flex-col gap-[3px] text-[14px] leading-6 text-white">
        <li><a href="#about">关于本站</a></li>
        <li><a href="#help">下载帮助</a></li>
      </ul>
      <div className="ml-auto">
        <QrCode />
        <div className="mt-[18px] flex items-center justify-between text-[#a5a5a5]">
          <FaWeixin size={20} />
          <FaWeibo size={20} />
          <FaQq size={17} />
        </div>
      </div>
    </footer>
  );
}

function PixelLogo() {
  return (
    <svg width="42" height="42" viewBox="0 0 42 42" aria-hidden="true">
      <rect x="1" y="1" width="40" height="40" rx="8" fill="#f5f5f5" stroke="#ccc" strokeWidth="2" />
      <path d="M6 8h29v29H6z" fill="#c62f33" />
      <path d="M11 13h20v20H11z" fill="#33070a" />
      <path d="M14 16h14v9h-4v4H14z" fill="#c62f33" />
      <path d="M7.500 10.500h27M7.500 34.500h22" stroke="#ffe9e9" strokeWidth="2.500" strokeDasharray="3 1" />
      <path d="M8.500 13.500v20M32.500 13.500v17" stroke="#ffe9e9" strokeWidth="2.500" strokeDasharray="3 1" />
      <path d="M15 18.500h12M15 22.500h12M15 26.500h8" stroke="#f7b2b2" strokeWidth="2.500" strokeDasharray="3 1" />
      <path d="M20 21h5v3h-5z" fill="#33070a" />
    </svg>
  );
}

function StickyBar() {
  return (
    <div className="flex h-[70px] items-center bg-[#000d14] pr-7 pl-[33px]">
      <PixelLogo />
      <h2 className="ml-6 w-[306px] text-[18px] font-bold text-white">Q-Dir v9.04 官方版</h2>
      <div className="flex h-9 items-start gap-6 text-[14px] leading-5 whitespace-nowrap text-[#4c5359]">
        <span>WMZhe 版权所有</span>
        <span>京ICP备19033657号</span>
        <span className="flex items-center gap-1.5">
          <svg width="16" height="18" viewBox="0 0 16 18" aria-hidden="true">
            <circle cx="8" cy="9" r="7.500" fill="#4c5158" />
            <circle cx="8" cy="8" r="5" fill="#10162c" stroke="#70757c" />
            <path d="M4 8c3-2 5-2 8 0" stroke="#838990" fill="none" />
          </svg>
          CNAAC认证合作伙伴
        </span>
      </div>
      <div className="ml-auto flex gap-[22px] text-[18px] font-bold">
        <button type="button" className="flex h-[50px] w-40 items-center gap-4 rounded-md bg-white pl-[18px] text-[#8c8c8c]">
          <svg width="30" height="28" viewBox="0 0 30 28" fill="none" stroke="#999" strokeWidth="2" strokeLinecap="round" aria-hidden="true">
            <path d="M15 1v18M8 12l7 7 7-7M1 19v5c0 2 1 3 3 3h22c2 0 3-1 3-3v-5" />
          </svg>
          本地下载
        </button>
        <button type="button" className="flex h-[50px] w-40 items-center gap-3.5 rounded-md bg-[#1fc262] pl-[17px] text-white">
          <Shield size={30} />
          安全下载
        </button>
      </div>
    </div>
  );
}

function Browser() {
  return (
    <div className="flex min-h-0 flex-1 flex-col bg-[#f7f7f7]">
      <TabStrip />
      <BrowserToolbar />
      <div className="mx-[3px] mb-[3px] flex min-h-0 flex-1 flex-col overflow-hidden rounded-lg border border-[#dedede] bg-[#fbfbfb]">
        <div className="flex min-h-0 flex-1">
          <main className="flex min-w-0 flex-1 flex-col bg-[#f4f8fb]">
            <DownloadPanel />
            <div className="min-h-0 flex-1" />
            <SiteFooter />
            <StickyBar />
          </main>
          <div className="flex w-[15px] flex-col items-center py-[9px] text-[#7f7f7f]">
            <Caret className="h-1.5 w-2.5 rotate-180" />
            <div className="mt-auto mb-2 h-[157px] w-[9px] rounded-full bg-[#8b8b8b]" />
            <Caret className="h-1.5 w-2.5" />
          </div>
        </div>
        <div className="flex h-[15px] items-center pr-[22px] pl-1.5 text-[#7f7f7f]">
          <Caret className="h-1.5 w-2.5 rotate-90" />
          <div className="mr-7 ml-[7px] h-[9px] flex-1 rounded-full bg-[#8b8b8b]" />
          <Caret className="h-1.5 w-2.5 -rotate-90" />
        </div>
      </div>
    </div>
  );
}

function Watermark() {
  return (
    <div className="pointer-events-none absolute right-12 bottom-[48px] flex h-[62px] items-center font-['Liberation_Sans_Narrow','DejaVu_Sans_Condensed',sans-serif] text-[38px] leading-none text-white/50">
      <span className="pt-4">ANY</span>
      <svg width="56" height="62" viewBox="0 0 58 62" fill="none" stroke="#fff" strokeOpacity=".5" strokeWidth="3" aria-hidden="true">
        <path d="M6 30V3l48 28L8 59l4-11 28-17L15 16v21" />
        <path d="M6 39v14l34-20" />
      </svg>
      <span className="pt-4">RUN</span>
    </div>
  );
}

function Taskbar() {
  return (
    <footer className="flex h-10 shrink-0 items-stretch bg-linear-to-r from-[#00171d] via-[#000f1f] to-[#030a20] text-white">
      <button type="button" aria-label="Start" className="flex w-12 items-center justify-center">
        <svg width="16" height="16" viewBox="0 0 16 16" aria-hidden="true">
          <path d="M0 2.300l6.800-1v6.300H0zM7.600 1.200L16 0v7.600H7.600zM0 8.400h6.800v6.300l-6.800-1zM7.600 8.400H16V16l-8.400-1.200z" fill="#fff" />
        </svg>
      </button>
      <label className="flex w-72 items-center border border-[#b9b9b9] bg-[#f1f1f1] pl-2.5 text-[#333]">
        <Search size={20} strokeWidth={1.500} className="-scale-x-100" />
        <input type="text" aria-label="Type here to search" placeholder="Type here to search" className="ml-2 min-w-0 flex-1 text-[14px] outline-none placeholder:text-[#444]" />
      </label>
      <button type="button" aria-label="Task View" className="flex w-12 items-center justify-center">
        <svg width="16" height="16" viewBox="0 0 16 16" fill="none" stroke="#fff" aria-hidden="true">
          <path d="M1.500 4.500h8v7h-8zM1.500 0v2.500h8V0M1.500 16v-2.500h8V16M13.500 0v4M13.500 9v7" />
          <path d="M12 5h3v3h-3z" fill="#fff" stroke="none" />
        </svg>
      </button>
      <button type="button" aria-label="Microsoft Edge" className="mx-[3px] flex w-[46px] items-center justify-center border-b-2 border-[#76b9ed]">
        <svg width="24" height="24" viewBox="0 0 24 24" aria-hidden="true">
          <defs>
            <linearGradient id="edgeTop" x1="0" y1="0" x2="1" y2=".5"><stop stopColor="#1b9de2" /><stop offset="1" stopColor="#66e07b" /></linearGradient>
          </defs>
          <circle cx="12" cy="12" r="12" fill="#0f6fc5" />
          <path d="M0 11C1 4 6 0 12 0c7 0 12 5 12 10 0 4-3 6-6 6-3 0-4-1-3-3 1-3-2-6-6-6-4 0-8 2-9 4z" fill="url(#edgeTop)" />
          <path d="M9 10c-4 5-1 12 7 13 3-1 5-3 6-5-6 3-13-1-10-7z" fill="#0b4b94" />
          <path d="M12 11c1-2 3 0 3 1-1 3 1 4 4 4 2 0 4-1 5-2-1 3-3 4-5 5-7 1-9-4-7-8z" fill="#00171f" />
        </svg>
      </button>
      <button type="button" aria-label="File Explorer task" className="flex w-12 items-center justify-center border-b-2 border-[#76b9ed] bg-[#344750]">
        <ExplorerIcon size={22} />
      </button>
      <button type="button" aria-label="Firefox" className="flex w-[50px] items-center justify-center">
        <svg width="24" height="24" viewBox="0 0 24 24" aria-hidden="true">
          <defs>
            <linearGradient id="fox" x1=".8" y1="0" x2=".2" y2="1"><stop stopColor="#ffe34d" /><stop offset=".5" stopColor="#ff7d2a" /><stop offset="1" stopColor="#f0206a" /></linearGradient>
          </defs>
          <path d="M3 5l2 2 3-3 2 3 4-7c1 3 4 4 5 7l1-1c5 8 1 18-8 18C2 24-2 14 3 5z" fill="url(#fox)" />
          <circle cx="12" cy="13" r="5" fill="#7c45dd" />
          <path d="M6 9c3-2 5 0 7 1-1 2-4 1-4 3 1 3 6 3 8 0 0 5-5 7-9 4-3-2-3-5-2-8z" fill="#ffa02c" />
        </svg>
      </button>
      <div className="ml-auto flex items-center">
        <ChevronUp size={18} strokeWidth={1.500} />
        <svg width="16" height="18" viewBox="0 0 16 18" fill="none" stroke="#fff" className="ml-[7px]" aria-hidden="true">
          <rect x="3" y="5.500" width="7" height="7" rx="1.500" />
          <path d="M10 8l3-2v6l-3-2M3 3c3-3 7-3 10 0M3 15c3 3 7 3 10 0" />
        </svg>
        <svg width="17" height="16" viewBox="0 0 17 16" fill="none" stroke="#fff" className="ml-2" aria-hidden="true">
          <path d="M5 3.500h11.500v8H3.500V7M8 12v2.500M5 14.500h7M.5.500h4v4h-4zM2.500 5v7" />
        </svg>
        <svg width="17" height="16" viewBox="0 0 17 16" fill="none" stroke="#fff" className="ml-[7px]" aria-hidden="true">
          <path d="M.5 5.500h3l4-4v13l-4-4h-3zM9.500 5.500c1 1.500 1 3.500 0 5M11.500 3.500c2 2.500 2 6.500 0 9M13.500 1.500c3 4 3 9 0 13" />
        </svg>
        <time className="ml-2 w-[54px] text-center text-[11px] leading-[18px]">
          1:18 PM
          <br />
          12/4/2024
        </time>
        <svg width="16" height="16" viewBox="0 0 16 16" fill="none" stroke="#fff" className="mr-[25px] ml-4" aria-hidden="true">
          <path d="M.5 1.500h15v11h-5L8 15l-2.500-2.500h-5z" />
        </svg>
      </div>
    </footer>
  );
}

export default function App() {
  return (
    <div className="relative flex h-screen w-full flex-col overflow-hidden font-['Open_Sans','Noto_Sans_CJK_SC',sans-serif]">
      <Browser />
      <ExplorerWindow />
      <Watermark />
      <Taskbar />
    </div>
  );
}
